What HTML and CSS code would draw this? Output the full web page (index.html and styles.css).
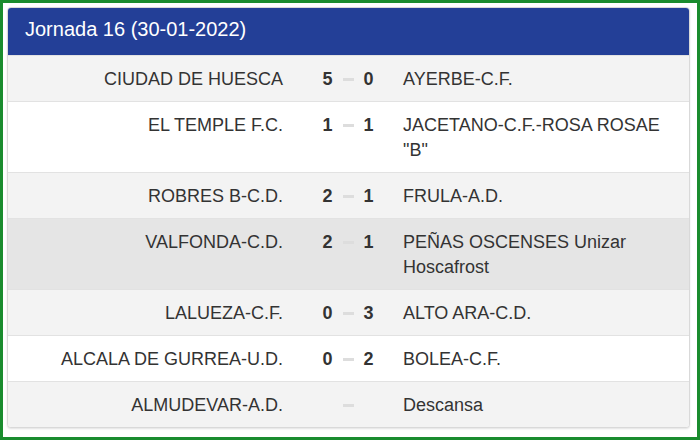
FILE: index.html
```html
<!DOCTYPE html>
<html lang="es">
<head>
<meta charset="utf-8">
<title>Jornada 16</title>
<link rel="stylesheet" href="styles.css">
</head>
<body>
<div class="frame">
  <div class="panel">
    <div class="panel-heading">Jornada 16 (30-01-2022)</div>
    <div class="matches">
      <div class="match odd">
        <div class="home">CIUDAD DE HUESCA</div>
        <div class="score"><b>5</b><span class="dash"></span><b>0</b></div>
        <div class="away">AYERBE-C.F.</div>
      </div>
      <div class="match">
        <div class="home">EL TEMPLE F.C.</div>
        <div class="score"><b>1</b><span class="dash"></span><b>1</b></div>
        <div class="away">JACETANO-C.F.-ROSA ROSAE "B"</div>
      </div>
      <div class="match odd">
        <div class="home">ROBRES B-C.D.</div>
        <div class="score"><b>2</b><span class="dash"></span><b>1</b></div>
        <div class="away">FRULA-A.D.</div>
      </div>
      <div class="match hover">
        <div class="home">VALFONDA-C.D.</div>
        <div class="score"><b>2</b><span class="dash"></span><b>1</b></div>
        <div class="away">PEÑAS OSCENSES Unizar Hoscafrost</div>
      </div>
      <div class="match odd">
        <div class="home">LALUEZA-C.F.</div>
        <div class="score"><b>0</b><span class="dash"></span><b>3</b></div>
        <div class="away">ALTO ARA-C.D.</div>
      </div>
      <div class="match">
        <div class="home">ALCALA DE GURREA-U.D.</div>
        <div class="score"><b>0</b><span class="dash"></span><b>2</b></div>
        <div class="away">BOLEA-C.F.</div>
      </div>
      <div class="match odd">
        <div class="home">ALMUDEVAR-A.D.</div>
        <div class="score"><b class="empty"></b><span class="dash"></span><b class="empty"></b></div>
        <div class="away">Descansa</div>
      </div>
    </div>
  </div>
</div>
</body>
</html>
```

FILE: styles.css
```css
html, body {
  margin: 0;
  padding: 0;
  background: #ffffff;
}

body {
  font-family: "Liberation Sans", Arial, Helvetica, sans-serif;
  color: #333333;
}

.frame {
  box-sizing: border-box;
  width: 700px;
  height: 440px;
  border: 3px solid #1a8c2e;
  padding: 4px 7px 4px 4px;
  background: #ffffff;
}

.panel {
  border: 1px solid #d9d9d9;
  border-radius: 4px;
  overflow: hidden;
  box-shadow: 0 1px 2px rgba(0, 0, 0, 0.12);
  background: #ffffff;
}

.panel-heading {
  background: #233f97;
  color: #ffffff;
  font-size: 20px;
  line-height: 27px;
  padding: 8px 17px 12px 17px;
  border-top: 1px solid #1b3380;
  margin-top: -1px;
}

.match {
  display: grid;
  grid-template-columns: 290px 100px 1fr;
  border-top: 1px solid #e2e2e2;
  font-size: 18px;
  line-height: 25px;
  background: #ffffff;
}

.match.odd {
  background: #f3f3f3;
}

.match.hover {
  background: #e5e5e5;
}

.home {
  padding: 11px 15px 9px 8px;
  text-align: right;
}

.score {
  padding: 11px 0 9px 0;
  display: flex;
  align-items: flex-start;
  justify-content: center;
  gap: 10px;
}

.score b {
  display: block;
  width: 10px;
  text-align: center;
  font-weight: bold;
}

.dash {
  display: block;
  width: 11px;
  height: 3px;
  margin-top: 11px;
  background: #dddddd;
}

.away {
  padding: 11px 15px 9px 5px;
}
```
